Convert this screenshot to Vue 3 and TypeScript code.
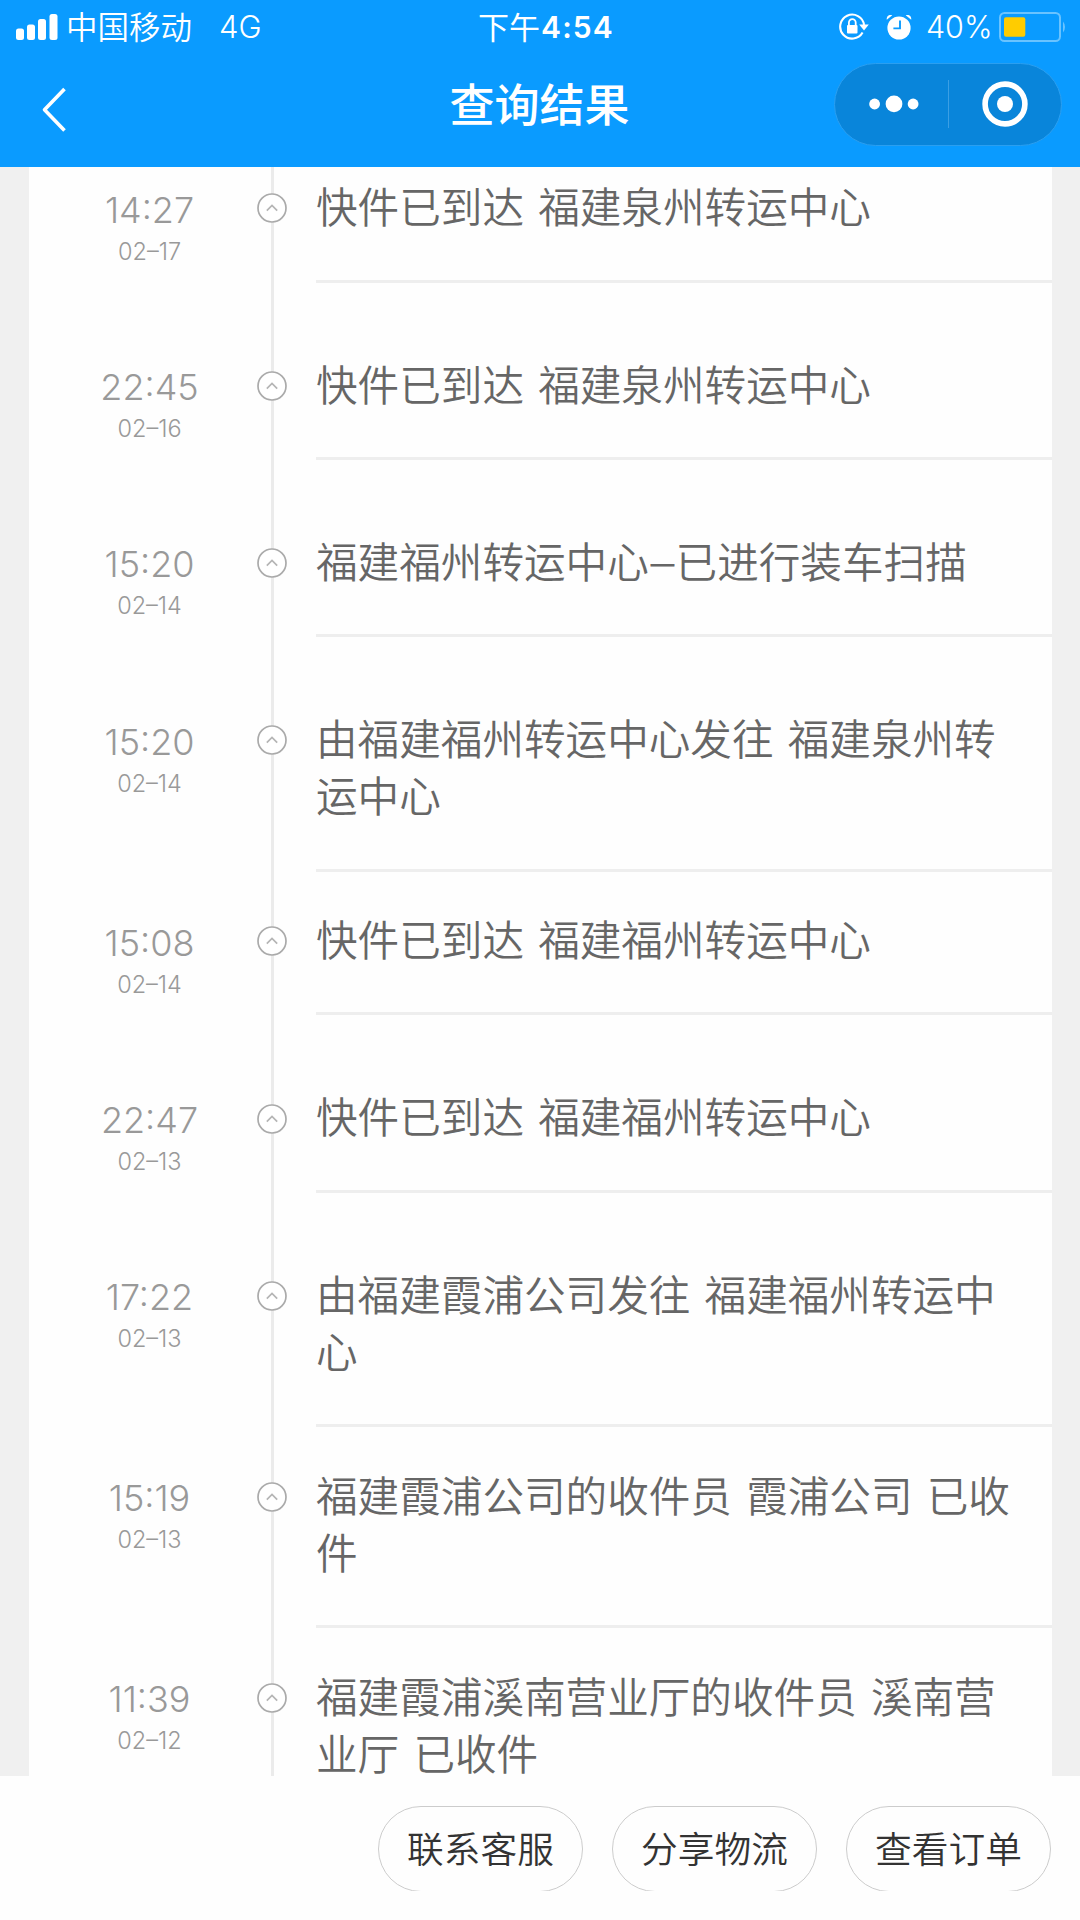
<script setup lang="ts">
interface TrackEvent {
  time: string
  date: string
  text: string
}

const events: TrackEvent[] = [
  { time: '14:27', date: '02–17', text: '快件已到达 福建泉州转运中心' },
  { time: '22:45', date: '02–16', text: '快件已到达 福建泉州转运中心' },
  { time: '15:20', date: '02–14', text: '福建福州转运中心–已进行装车扫描' },
  { time: '15:20', date: '02–14', text: '由福建福州转运中心发往 福建泉州转运中心' },
  { time: '15:08', date: '02–14', text: '快件已到达 福建福州转运中心' },
  { time: '22:47', date: '02–13', text: '快件已到达 福建福州转运中心' },
  { time: '17:22', date: '02–13', text: '由福建霞浦公司发往 福建福州转运中心' },
  { time: '15:19', date: '02–13', text: '福建霞浦公司的收件员 霞浦公司 已收件' },
  { time: '11:39', date: '02–12', text: '福建霞浦溪南营业厅的收件员 溪南营业厅 已收件' },
]

const actions: string[] = ['联系客服', '分享物流', '查看订单']

// Keeps each dash as its own piece so it can be spaced separately.
const pieces = (text: string): string[] => text.split(/(–)/)
</script>

<template>
  <div class="screen">
    <header class="top">
      <div class="status">
        <div class="carrier">
          <svg class="signal" width="42" height="26" viewBox="0 0 42 26" fill="#fff">
            <rect x="0" y="14.5" width="8" height="11.5" rx="2.5" />
            <rect x="11" y="10.5" width="8" height="15.5" rx="2.5" />
            <rect x="22" y="5" width="8" height="21" rx="2.5" />
            <rect x="33.5" y="0" width="8" height="26" rx="2.5" />
          </svg>
          <span class="operator">中国移动</span>
          <span class="network">4G</span>
        </div>
        <div class="clock"><span class="ampm">下午</span><span class="digits">4:54</span></div>
        <div class="indicators">
          <svg class="lock" width="30" height="28" viewBox="0 0 30 28" fill="none" stroke="#fff">
            <path d="M23.6 19.6A12 12 0 1 1 25.1 12" stroke-width="2.1" />
            <path d="M20.2 11.6H29.8L25 17.6Z" fill="#fff" stroke="none" />
            <rect x="8" y="12" width="10.5" height="8.6" rx="1" fill="#fff" stroke="none" />
            <path d="M9.9 12.5V9.6a3.4 3.4 0 0 1 6.8 0v2.9" stroke-width="1.8" />
          </svg>
          <svg class="alarm" width="26" height="26" viewBox="0 0 26 26">
            <circle cx="13" cy="14" r="11.6" fill="#fff" />
            <path d="M.8 5.8C.2 2.5 3 .2 6.3 1.3ZM25.2 5.8C25.8 2.5 23 .2 19.7 1.3Z" fill="#fff" />
            <path d="M14 6.5V14.4H7.4" fill="none" stroke="#0a9bff" stroke-width="1.9" />
          </svg>
          <span class="percent">40%</span>
          <svg class="battery" width="68" height="30" viewBox="0 0 68 30">
            <rect x="1" y="1" width="60" height="28" rx="4.5" fill="none" stroke="#6ac3ff" stroke-width="2" />
            <rect x="5" y="5.2" width="21.3" height="19.6" rx="2" fill="#fc0" />
            <path d="M64 9.5a8.5 8.5 0 0 1 0 11Z" fill="#6ac3ff" />
          </svg>
        </div>
      </div>
      <div class="nav">
        <svg class="back" width="26" height="46" viewBox="0 0 26 46" fill="none" stroke="#fff" stroke-width="3.6">
          <path d="M23.5 2L3.5 22.7L23.5 43.5" stroke-linejoin="round" />
        </svg>
        <h1 class="title">查询结果</h1>
        <div class="capsule">
          <svg class="more" width="50" height="20" viewBox="0 0 50 20" fill="#fff">
            <circle cx="5.6" cy="10" r="5.4" />
            <circle cx="25" cy="9.9" r="8.4" />
            <circle cx="44.1" cy="10" r="5.4" />
          </svg>
          <span class="split"></span>
          <svg class="target" width="46" height="46" viewBox="0 0 46 46">
            <circle cx="23" cy="23" r="19.9" fill="none" stroke="#fff" stroke-width="5.6" />
            <circle cx="23" cy="23" r="8" fill="#fff" />
          </svg>
        </div>
      </div>
    </header>

    <main class="viewport">
      <ol class="list">
        <li v-for="(event, index) in events" :key="index" class="item">
          <div class="when">
            <span class="time">{{ event.time }}</span>
            <span class="date">{{ event.date }}</span>
          </div>
          <div class="rail">
            <svg class="node" width="30" height="30" viewBox="0 0 30 30" fill="none">
              <circle cx="15" cy="15" r="14" fill="#fff" stroke="#aaa" stroke-width="1.7" />
              <path d="M9.8 17.7L15 12.4L20.2 17.7" stroke="#b5b5b5" stroke-width="1.7" />
            </svg>
          </div>
          <div class="body">
            <span v-for="(piece, i) in pieces(event.text)" :key="i" :class="{ dash: piece === '–' }">{{ piece }}</span>
          </div>
        </li>
      </ol>
    </main>

    <footer class="actions">
      <div v-for="label in actions" :key="label" class="clip">
        <button class="action" type="button">{{ label }}</button>
      </div>
    </footer>
  </div>
</template>

<style>
body {
  margin: 0;
}
</style>

<style scoped>
.screen {
  display: flex;
  flex-direction: column;
  width: 1080px;
  height: 1920px;
  overflow: hidden;
  background: #fefefe;
  font-family: Inter, "Noto Sans CJK SC", sans-serif;
  font-weight: 300;
}

.top {
  flex: none;
  height: 167px;
  background: #0a9bff;
  color: #fff;
}

.status {
  display: grid;
  grid-template-columns: 1fr auto 1fr;
  align-items: center;
  height: 54px;
  padding: 0 13px 0 16px;
  box-sizing: border-box;
}

.carrier,
.clock,
.indicators {
  display: flex;
  align-items: center;
  line-height: 40px;
  white-space: nowrap;
}

.operator {
  margin: -4px 0 0 8px;
  font-family: "Noto Sans CJK SC", sans-serif;
  font-size: 31.5px;
  font-weight: 350;
}

.network {
  margin-left: 27px;
  font-size: 31px;
}

.clock {
  padding-left: 9px;
  font-size: 31px;
}

.ampm {
  margin-top: -2px;
  font-family: "Noto Sans CJK SC", sans-serif;
  font-weight: 400;
}

.digits {
  margin-left: 1px;
  font-size: 30px;
  font-weight: 600;
  letter-spacing: 1.1px;
}

.indicators {
  justify-content: flex-end;
}

.alarm {
  margin-left: 16.7px;
}

.percent {
  margin-left: 14.3px;
  font-size: 30.5px;
}

.battery {
  margin-left: 6.5px;
}

.nav {
  display: grid;
  grid-template-columns: 228px 1fr 228px;
  align-items: center;
  height: 102px;
  padding: 0 18px 0 41px;
}

.back {
  margin-top: 9px;
}

.title {
  margin: -4px 0 0;
  padding-right: 24px;
  font-family: "Noto Sans CJK SC", sans-serif;
  font-size: 45px;
  font-weight: 500;
  line-height: 60px;
  text-align: center;
}

.capsule {
  display: flex;
  align-items: center;
  width: 228px;
  height: 83px;
  margin-top: -2px;
  box-sizing: border-box;
  border: 1.5px solid #2b9ff0;
  border-radius: 42px;
  background: #0985da;
}

.more {
  margin-left: 34px;
}

.split {
  width: 1px;
  height: 48px;
  margin-left: 29px;
  background: #3b9fe4;
}

.target {
  margin-left: 33px;
}

.viewport {
  flex: none;
  height: 1609px;
  overflow: hidden;
  background: #f0f0f0;
}

.list {
  margin: -28.3px 28.5px 0;
  padding: 0;
  list-style: none;
  background: #fefefe;
}

.item {
  display: flex;
  align-items: stretch;
  min-height: 177.3px;
}

.when {
  display: flex;
  flex-direction: column;
  align-items: center;
  width: 242px;
  padding-top: 49px;
  color: #999;
}

.time {
  font-size: 36px;
  line-height: 44px;
}

.date {
  font-size: 23.5px;
  line-height: 30px;
  margin-top: 5px;
}

.rail {
  width: 3px;
  margin-right: 42.5px;
  display: flex;
  justify-content: center;
  background: #ebebeb;
}

.node {
  flex: none;
  margin-top: 54.7px;
}

.body {
  flex: 1;
  align-self: flex-start;
  box-sizing: border-box;
  padding: 41.5px 24px 42px 0;
  border-bottom: 3px solid #eee;
  color: #666;
  font-family: Inter, "Noto Sans CJK SC", sans-serif;
  font-size: 41.6px;
  font-weight: 350;
  line-height: 57.3px;
  word-spacing: 2.5px;
}

.dash {
  display: inline-block;
  margin: 0 3px;
  transform: scaleX(1.15);
}

.actions {
  display: flex;
  flex: 1;
  justify-content: flex-end;
  gap: 29px;
  padding: 30px 29px 0 0;
}

.clip {
  height: 84.5px;
  overflow: hidden;
}

.action {
  display: block;
  width: 205px;
  height: 86px;
  padding: 0 0 4px;
  border: 1px solid #ccc;
  border-radius: 43px;
  background: #fefefe;
  color: #333;
  font-family: "Noto Sans CJK SC", sans-serif;
  font-size: 36.7px;
  font-weight: 350;
  line-height: 77px;
  white-space: nowrap;
}
</style>
